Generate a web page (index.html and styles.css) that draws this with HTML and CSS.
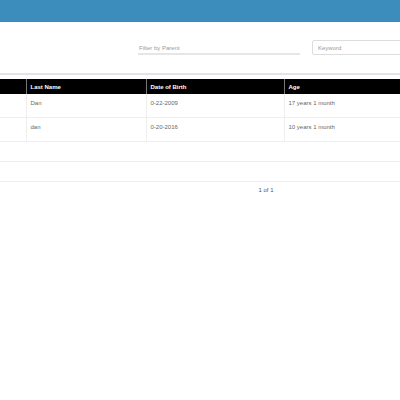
FILE: index.html
```html
<!DOCTYPE html>
<html lang="en">
<head>
    <meta charset="UTF-8">
    <meta name="viewport" content="width=device-width, initial-scale=1.0">
    <link rel="stylesheet" href="styles.css">
    <title>Children</title>
</head>
<body>
    <div class="page">
        <div class="top-bar"></div>

        <div class="toolbar">
            <input type="text" class="filter-parent" placeholder="Filter by Parent">
            <input type="text" class="keyword" placeholder="Keyword">
        </div>

        <table class="grid">
            <thead>
                <tr>
                    <th class="col-check"></th>
                    <th class="col-last">Last Name</th>
                    <th class="col-dob">Date of Birth</th>
                    <th>Age</th>
                </tr>
            </thead>
            <tbody>
                <tr>
                    <td></td>
                    <td>Dan</td>
                    <td>0-22-2009</td>
                    <td>17 years 1 month</td>
                </tr>
                <tr>
                    <td></td>
                    <td>dan</td>
                    <td>0-20-2016</td>
                    <td>10 years 1 month</td>
                </tr>
                <tr class="empty"><td colspan="4"></td></tr>
                <tr class="empty"><td colspan="4"></td></tr>
            </tbody>
        </table>

        <div class="pager">1 of 1</div>
    </div>
</body>
</html>
```

FILE: styles.css
```css
*{
    box-sizing: border-box;
}

html{
    overflow-x: hidden;
}

body{
    margin: 0;
    font-family: "Liberation Sans", Arial, sans-serif;
    font-size: 6px;
    color: #666;
    background-color: #fff;
}

.page{
    width: 532px;
}

.top-bar{
    height: 22px;
    background-color: #3c8dbc;
}

.toolbar{
    display: flex;
    align-items: flex-end;
    height: 53px;
    padding-left: 138px;
    padding-bottom: 18px;
    border-bottom: 2px solid #e2e2ea;
}

.toolbar input{
    font-family: inherit;
    font-size: 6px;
    color: #555;
    outline: none;
}

.toolbar input::placeholder{
    color: #999;
}

.filter-parent{
    width: 162px;
    height: 11px;
    padding: 0 1px 1px;
    border: none;
    border-bottom: 2px solid #e6e6e6;
}

.keyword{
    width: 160px;
    height: 15px;
    margin-left: 12px;
    padding: 0 5px;
    border: 1px solid #ddd;
    border-radius: 2px;
}

.grid{
    width: 100%;
    margin-top: 4px;
    border-collapse: collapse;
    table-layout: fixed;
}

.grid th{
    height: 15px;
    padding: 0 4px;
    text-align: left;
    font-weight: bold;
    color: #fff;
    background-color: #000;
    border-left: 1px solid #777;
}

.grid th:first-child{
    border-left: none;
}

.col-check{
    width: 26px;
}

.col-last{
    width: 120px;
}

.col-dob{
    width: 138px;
}

.grid td{
    height: 24px;
    padding: 5px 4px 0;
    line-height: 8px;
    vertical-align: top;
    border-left: 1px solid #eee;
    border-bottom: 1px solid #eee;
}

.grid td:first-child{
    border-left: none;
}

.grid tr:first-child td{
    height: 23px;
}

.grid .empty td{
    height: 20px;
    padding: 0;
}

.pager{
    padding-top: 5px;
    text-align: center;
    color: #555;
}
```
